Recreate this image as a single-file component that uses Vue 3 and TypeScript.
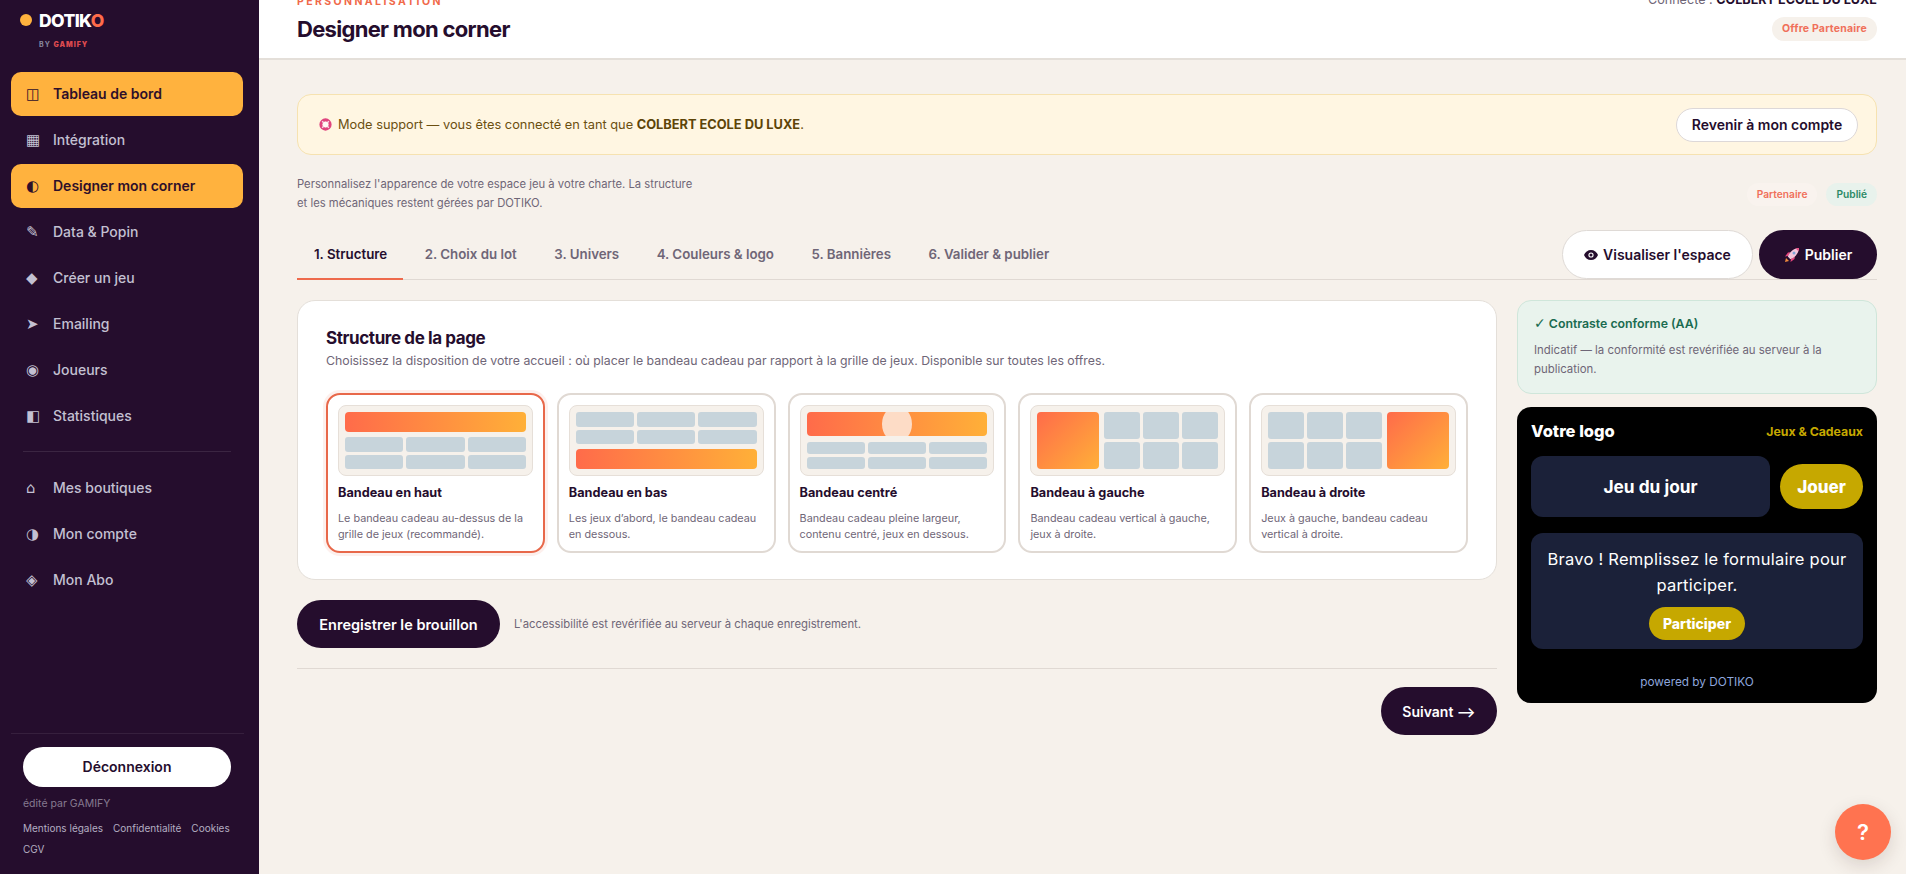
<script setup lang="ts">
interface NavItem {
  icon: string
  label: string
  active?: boolean
}

interface LayoutOption {
  id: string
  title: string
  desc: string
}

const mainNav: NavItem[] = [
  { icon: '◫', label: 'Tableau de bord', active: true },
  { icon: '▦', label: 'Intégration' },
  { icon: '◐', label: 'Designer mon corner', active: true },
  { icon: '✎', label: 'Data & Popin' },
  { icon: '◆', label: 'Créer un jeu' },
  { icon: '➤', label: 'Emailing' },
  { icon: '◉', label: 'Joueurs' },
  { icon: '◧', label: 'Statistiques' },
]

const accountNav: NavItem[] = [
  { icon: '⌂', label: 'Mes boutiques' },
  { icon: '◑', label: 'Mon compte' },
  { icon: '◈', label: 'Mon Abo' },
]

const tabs = ['1. Structure', '2. Choix du lot', '3. Univers', '4. Couleurs & logo', '5. Bannières', '6. Valider & publier']

const options: LayoutOption[] = [
  { id: 'top', title: 'Bandeau en haut', desc: 'Le bandeau cadeau au-dessus de la grille de jeux (recommandé).' },
  { id: 'bottom', title: 'Bandeau en bas', desc: 'Les jeux d’abord, le bandeau cadeau en dessous.' },
  { id: 'center', title: 'Bandeau centré', desc: 'Bandeau cadeau pleine largeur, contenu centré, jeux en dessous.' },
  { id: 'left', title: 'Bandeau à gauche', desc: 'Bandeau cadeau vertical à gauche, jeux à droite.' },
  { id: 'right', title: 'Bandeau à droite', desc: 'Jeux à gauche, bandeau cadeau vertical à droite.' },
]
</script>

<template>
  <div class="shell">
    <aside class="sidebar">
      <div class="brand">
        <div class="brand-line"><span class="brand-dot"></span><span class="brand-name">DOTIK<em>O</em></span></div>
        <div class="brand-by">BY <b>GAMIFY</b></div>
      </div>
      <nav class="nav">
        <a v-for="item in mainNav" :key="item.label" class="nav-item" :class="{ active: item.active }">
          <span class="nav-icon">{{ item.icon }}</span>{{ item.label }}
        </a>
      </nav>
      <div class="nav-sep"></div>
      <nav class="nav">
        <a v-for="item in accountNav" :key="item.label" class="nav-item">
          <span class="nav-icon">{{ item.icon }}</span>{{ item.label }}
        </a>
      </nav>
      <div class="side-foot">
        <button class="logout">Déconnexion</button>
        <div class="edited">édité par GAMIFY</div>
        <div class="legal">
          <span>Mentions légales</span><span>Confidentialité</span><span>Cookies</span><span>CGV</span>
        </div>
      </div>
    </aside>

    <main class="main">
      <header class="topbar">
        <div>
          <div class="eyebrow">PERSONNALISATION</div>
          <h1>Designer mon corner</h1>
        </div>
        <div class="top-right">
          <div class="connected">Connecté : <b>COLBERT ECOLE DU LUXE</b></div>
          <span class="offer">Offre Partenaire</span>
        </div>
      </header>

      <div class="content">
        <div class="support">
          <div class="support-text">
            <svg class="buoy" width="13" height="13" viewBox="0 0 14 14">
              <circle cx="7" cy="7" r="4.9" fill="none" stroke="#e0457f" stroke-width="3.4" />
              <path d="M3.4 3.4l1.4 1.4M10.6 3.4l-1.4 1.4M3.4 10.6l1.4-1.4M10.6 10.6l-1.4-1.4" stroke="#f9dfe9" stroke-width="1.5" />
              <circle cx="7" cy="7" r="3" fill="#fff8f4" />
            </svg>
            <span>Mode support — vous êtes connecté en tant que <b>COLBERT ECOLE DU LUXE</b>.</span>
          </div>
          <button class="back">Revenir à mon compte</button>
        </div>

        <div class="intro">
          <p>Personnalisez l'apparence de votre espace jeu à votre charte. La structure<br />et les mécaniques restent gérées par DOTIKO.</p>
          <div class="intro-badges">
            <span class="badge coral">Partenaire</span>
            <span class="badge green">Publié</span>
          </div>
        </div>

        <div class="tabbar">
          <div class="tabs">
            <span v-for="(tab, i) in tabs" :key="tab" class="tab" :class="{ current: i === 0 }">{{ tab }}</span>
          </div>
          <div class="tab-actions">
            <button class="pill light">
              <svg width="14" height="10" viewBox="0 0 14 10">
                <path d="M7 0C3.8 0 1.2 2 0 5c1.2 3 3.8 5 7 5s5.8-2 7-5c-1.2-3-3.8-5-7-5z" fill="#250d2d" />
                <circle cx="7" cy="5" r="2.6" fill="#fff" />
                <circle cx="7" cy="5" r="1.5" fill="#250d2d" />
              </svg>
              Visualiser l'espace
            </button>
            <button class="pill dark">
              <svg width="16" height="16" viewBox="0 0 16 16">
                <path d="M1 15l1-4 3 3z" fill="#f08a3c" />
                <path d="M4 9l-3 .5 3-4 2.5-.3zM7 12l-.5 3 4-3 .3-2.5z" fill="#e8457f" />
                <path d="M3.8 9.6C5.5 5 9.5 1.5 15 1c-.4 5.5-4 9.5-8.6 11.2z" fill="#f3c6dc" />
                <path d="M11.3 1.6c1 .3 2.6 1.8 3 3 .4-1.2.6-2.4.7-3.6-1.3.1-2.5.3-3.7.6z" fill="#e8457f" />
                <circle cx="10" cy="6" r="1.5" fill="#7fa6d8" />
              </svg>
              Publier
            </button>
          </div>
        </div>

        <div class="columns">
          <div class="left-col">
            <section class="card">
              <h2>Structure de la page</h2>
              <p class="card-sub">Choisissez la disposition de votre accueil : où placer le bandeau cadeau par rapport à la grille de jeux. Disponible sur toutes les offres.</p>
              <div class="option-grid">
                <div v-for="(opt, i) in options" :key="opt.id" class="option" :class="{ selected: i === 0 }">
                  <div class="preview" :class="opt.id">
                    <div class="band"><span v-if="opt.id === 'center'" class="band-spot"></span></div>
                    <div class="cells"><i v-for="n in 6" :key="n"></i></div>
                  </div>
                  <div class="option-title">{{ opt.title }}</div>
                  <div class="option-desc">{{ opt.desc }}</div>
                </div>
              </div>
            </section>

            <div class="save-row">
              <button class="pill dark save">Enregistrer le brouillon</button>
              <span class="save-note">L'accessibilité est revérifiée au serveur à chaque enregistrement.</span>
            </div>
            <div class="next-row">
              <button class="pill dark next">Suivant ⟶</button>
            </div>
          </div>

          <div class="right-col">
            <div class="contrast">
              <div class="contrast-title"><span class="check">✓</span> Contraste conforme (AA)</div>
              <div class="contrast-text">Indicatif — la conformité est revérifiée au serveur à la publication.</div>
            </div>
            <div class="live">
              <div class="live-head">
                <span class="live-logo">Votre logo</span>
                <span class="live-tag">Jeux &amp; Cadeaux</span>
              </div>
              <div class="live-game">
                <div class="live-box">Jeu du jour</div>
                <span class="live-play">Jouer</span>
              </div>
              <div class="live-form">
                <p>Bravo ! Remplissez le formulaire pour participer.</p>
                <span class="live-cta">Participer</span>
              </div>
              <div class="live-foot">powered by DOTIKO</div>
            </div>
          </div>
        </div>
      </div>
    </main>

    <button class="help">?</button>
  </div>
</template>

<style>
html,
body {
  margin: 0;
  overflow: hidden;
}
</style>

<style scoped>
.shell {
  display: flex;
  height: 874px;
  overflow: hidden;
  background: #f6f1eb;
  font-family: Inter, 'Liberation Sans', sans-serif;
  color: #250d2d;
  position: relative;
}
.sidebar {
  width: 259px;
  flex: none;
  background: #250d2d;
  display: flex;
  flex-direction: column;
  box-sizing: border-box;
  padding: 0 16px 0 11px;
}
.brand {
  padding: 10px 9px 0;
  height: 72px;
  box-sizing: border-box;
}
.brand-line {
  display: flex;
  align-items: center;
  gap: 7px;
  height: 20px;
}
.brand-dot {
  width: 12px;
  height: 12px;
  border-radius: 50%;
  background: #ffb23e;
}
.brand-name {
  font-size: 17.5px;
  font-weight: 800;
  letter-spacing: -0.6px;
  color: #fff;
}
.brand-name em {
  font-style: normal;
  color: #ff6b4a;
}
.brand-by {
  margin: 10px 0 0 19px;
  font-size: 7px;
  font-weight: 700;
  letter-spacing: 1px;
  color: #8b8aa0;
}
.brand-by b {
  color: #dc4a4f;
}
.nav {
  display: flex;
  flex-direction: column;
  gap: 2px;
}
.nav-item {
  height: 44px;
  box-sizing: border-box;
  padding: 0 0 1px 15px;
  display: flex;
  align-items: center;
  border-radius: 10px;
  font-size: 14px;
  font-weight: 500;
  color: #c3c0d2;
}
.nav-item.active {
  background: #ffb23e;
  color: #2e0f2a;
  font-weight: 600;
}
.nav-icon {
  width: 27px;
  font-family: 'DejaVu Sans', sans-serif;
  font-size: 15px;
  line-height: 20px;
}
.nav-sep {
  height: 1px;
  margin: 13px 12px 14px;
  background: rgba(255, 255, 255, 0.1);
}
.side-foot {
  margin: auto -16px 0 -11px;
  padding: 0 23px;
  height: 141px;
  box-sizing: border-box;
  position: relative;
}
.side-foot::before {
  content: '';
  position: absolute;
  left: 11px;
  right: 15px;
  top: 0;
  height: 1px;
  background: rgba(255, 255, 255, 0.08);
}
.logout {
  display: block;
  width: 208px;
  height: 40px;
  margin-top: 14px;
  border: none;
  border-radius: 20px;
  background: #fff;
  color: #250d2d;
  font: 600 14px Inter, sans-serif;
  padding-bottom: 2px;
}
.edited {
  margin-top: 9px;
  font-size: 10.5px;
  line-height: 16px;
  color: #857a90;
}
.legal {
  margin-top: 6px;
  display: flex;
  flex-wrap: wrap;
  column-gap: 10px;
  font-size: 10px;
  line-height: 21px;
  color: #b4aec2;
}
.main {
  flex: 1;
  min-width: 0;
  height: 874px;
  overflow: hidden;
}
.topbar {
  margin-top: -14px;
  height: 74px;
  box-sizing: border-box;
  background: #fff;
  border-bottom: 2px solid #e4dfd9;
  padding: 0 29px 0 38px;
  display: flex;
  justify-content: space-between;
  align-items: flex-start;
}
.eyebrow {
  margin-top: 9px;
  font-size: 10.5px;
  line-height: 14px;
  font-weight: 700;
  letter-spacing: 2.4px;
  color: #f0694a;
}
h1 {
  margin: 5px 0 0;
  font-size: 22px;
  line-height: 30px;
  font-weight: 700;
  letter-spacing: -0.7px;
}
.top-right {
  display: flex;
  flex-direction: column;
  align-items: flex-end;
  padding-top: 6px;
}
.connected {
  font-size: 12.6px;
  line-height: 16px;
  color: #6f6677;
}
.connected b {
  color: #250d2d;
}
.offer {
  margin-top: 9px;
  height: 24px;
  line-height: 24px;
  padding: 0 10px;
  border-radius: 12px;
  background: #f6f1eb;
  color: #f0705a;
  font-size: 10.5px;
  font-weight: 700;
  letter-spacing: 0.2px;
}
.content {
  padding: 34px 29px 0 38px;
}
.support {
  height: 61px;
  box-sizing: border-box;
  border: 1px solid #f6e2b0;
  border-radius: 14px;
  background: #fff6e2;
  display: flex;
  align-items: center;
  justify-content: space-between;
  padding: 0 18px 0 21px;
}
.support-text {
  font-size: 12.8px;
  color: #6b4f10;
  display: flex;
  align-items: center;
  gap: 6px;
  padding-bottom: 1px;
}
.support-text b {
  color: #5d4407;
}
.back {
  height: 34px;
  width: 182px;
  border: 1px solid #ddd8d8;
  border-radius: 17px;
  background: #fff;
  color: #250d2d;
  font: 600 14px Inter, sans-serif;
  padding: 0 0 1px;
}
.intro {
  margin-top: 20px;
  display: flex;
  justify-content: space-between;
  align-items: center;
}
.intro p {
  margin: 0;
  font-size: 11.25px;
  line-height: 19px;
  color: #6f6677;
}
.intro-badges {
  display: flex;
  gap: 9px;
}
.badge {
  height: 23px;
  line-height: 23px;
  padding: 0 10px;
  border-radius: 12px;
  font-size: 10.2px;
  font-weight: 600;
}
.badge.coral {
  background: #f9f3ee;
  color: #f0705a;
}
.badge.green {
  background: #e8f2ec;
  color: #2c8a66;
}
.tabbar {
  margin-top: 17px;
  height: 50px;
  box-sizing: border-box;
  border-bottom: 1px solid #e0d9d3;
  display: flex;
  justify-content: space-between;
  align-items: flex-end;
}
.tabs {
  display: flex;
  gap: 5.5px;
}
.tab {
  height: 50px;
  box-sizing: border-box;
  padding: 16px 16px 0;
  font-size: 13.3px;
  font-weight: 600;
  color: #6f6677;
  margin-bottom: -1px;
  border-bottom: 2px solid transparent;
}
.tab.current {
  padding-left: 17px;
  color: #250d2d;
  border-bottom-color: #ee6a4c;
}
.tab-actions {
  display: flex;
  gap: 6px;
  align-self: flex-start;
}
.pill {
  height: 49px;
  border-radius: 25px;
  display: inline-flex;
  align-items: center;
  justify-content: center;
  gap: 5px;
  font: 600 14px Inter, sans-serif;
}
.pill.light {
  width: 191px;
  border: 1px solid #dfdad6;
  background: #fff;
  color: #250d2d;
}
.pill.dark {
  border: none;
  background: #250d2d;
  color: #fff;
}
.tab-actions .dark {
  width: 118px;
}
.columns {
  display: flex;
  gap: 20px;
  margin-top: 20px;
  align-items: flex-start;
}
.left-col {
  flex: 1;
  min-width: 0;
}
.card {
  height: 280px;
  box-sizing: border-box;
  border: 1px solid #e4dfd9;
  border-radius: 18px;
  background: #fff;
  padding: 26px 28px 0;
}
h2 {
  margin: 0;
  font-size: 17px;
  line-height: 22px;
  font-weight: 700;
  letter-spacing: -0.4px;
}
.card-sub {
  margin: 2px 0 0;
  font-size: 12.3px;
  line-height: 20px;
  color: #6f6677;
}
.option-grid {
  margin-top: 22px;
  display: grid;
  grid-template-columns: repeat(5, 1fr);
  gap: 12px;
}
.option {
  height: 160px;
  box-sizing: border-box;
  border: 2px solid #e0d9d3;
  border-radius: 14px;
  padding: 10px;
  background: #fff;
}
.option.selected {
  border-color: #e8684a;
  box-shadow: 0 0 0 3px rgba(238, 106, 76, 0.1);
}
.preview {
  height: 71px;
  box-sizing: border-box;
  border: 1px solid #e6dfd8;
  border-radius: 8px;
  background: #f6f1eb;
  padding: 6px;
  display: flex;
  flex-direction: column;
  gap: 5px;
}
.band {
  flex: none;
  height: 20px;
  border-radius: 4px;
  background: linear-gradient(90deg, #ff6b4a, #ffb038);
  position: relative;
  overflow: hidden;
}
.band-spot {
  position: absolute;
  left: 50%;
  top: -6px;
  width: 30px;
  height: 36px;
  margin-left: -15px;
  border-radius: 50%;
  background: #fddcc6;
}
.cells {
  flex: 1;
  display: grid;
  grid-template-columns: repeat(3, 1fr);
  grid-template-rows: repeat(2, 1fr);
  gap: 3px;
}
.cells i {
  border-radius: 3px;
  background: #c7d4db;
}
.preview.bottom {
  flex-direction: column-reverse;
}
.preview.center .band {
  height: 24px;
}
.preview.center {
  gap: 6px;
}
.preview.left,
.preview.right {
  flex-direction: row;
}
.preview.right {
  flex-direction: row-reverse;
}
.preview.left .band,
.preview.right .band {
  width: 62px;
  height: auto;
  background: linear-gradient(135deg, #ff6b4a, #ffb038);
}
.option-title {
  margin-top: 9px;
  font-size: 12.7px;
  line-height: 16px;
  font-weight: 700;
}
.option-desc {
  margin-top: 10px;
  font-size: 10.8px;
  line-height: 16px;
  color: #6f6677;
}
.save-row {
  margin-top: 20px;
  display: flex;
  align-items: center;
  gap: 14px;
}
.save {
  width: 203px;
  height: 48px;
  flex: none;
  font-size: 14.5px;
}
.save-note {
  font-size: 11.3px;
  color: #6f6677;
}
.next-row {
  margin-top: 20px;
  padding-top: 18px;
  border-top: 1px solid #e0d9d3;
  display: flex;
  justify-content: flex-end;
}
.next {
  width: 116px;
  height: 48px;
}
.right-col {
  width: 360px;
  flex: none;
  display: flex;
  flex-direction: column;
  gap: 13px;
}
.contrast {
  height: 94px;
  box-sizing: border-box;
  border: 1px solid #cfe6da;
  border-radius: 14px;
  background: #e9f3ed;
  padding: 13px 16px;
}
.contrast-title {
  font-size: 12.3px;
  line-height: 19px;
  font-weight: 600;
  color: #1a6b50;
}
.check {
  font-family: 'DejaVu Sans', sans-serif;
  font-size: 14px;
  font-weight: 700;
}
.contrast-text {
  margin-top: 8px;
  font-size: 11.4px;
  line-height: 19px;
  color: #6f6677;
}
.live {
  height: 296px;
  box-sizing: border-box;
  border-radius: 14px;
  background: #000;
  padding: 14px;
  color: #fff;
  display: flex;
  flex-direction: column;
}
.live-head {
  display: flex;
  justify-content: space-between;
  align-items: center;
  height: 20px;
}
.live-logo {
  font-size: 16.5px;
  font-weight: 800;
}
.live-tag {
  font-size: 12.3px;
  font-weight: 700;
  color: #c6a800;
}
.live-game {
  margin-top: 15px;
  display: flex;
  align-items: center;
  gap: 10px;
}
.live-box {
  flex: 1;
  height: 61px;
  border-radius: 12px;
  background: #1b2139;
  display: flex;
  align-items: center;
  justify-content: center;
  font-size: 17.3px;
  font-weight: 700;
}
.live-play {
  width: 83px;
  height: 45px;
  border-radius: 23px;
  background: #c6a800;
  display: flex;
  align-items: center;
  justify-content: center;
  font-size: 17px;
  font-weight: 800;
}
.live-form {
  margin-top: 16px;
  height: 122px;
  box-sizing: border-box;
  border-radius: 12px;
  background: #1b2139;
  padding: 13px 10px 0;
  text-align: center;
}
.live-form p {
  margin: 0;
  font-size: 16.5px;
  line-height: 26px;
  letter-spacing: 0.25px;
}
.live-cta {
  display: inline-block;
  margin-top: 9px;
  width: 96px;
  height: 33px;
  line-height: 33px;
  border-radius: 17px;
  background: #c6a800;
  font-size: 14px;
  font-weight: 800;
}
.live-foot {
  margin-top: 26px;
  text-align: center;
  font-size: 11.8px;
  line-height: 14px;
  color: #8ea6dc;
}
.help {
  position: absolute;
  left: 1835px;
  top: 804px;
  width: 56px;
  height: 56px;
  border: none;
  border-radius: 50%;
  background: #ff7350;
  color: #fff;
  box-shadow: 0 6px 18px rgba(60, 30, 20, 0.14);
  font: 600 22px Inter, sans-serif;
}
</style>
